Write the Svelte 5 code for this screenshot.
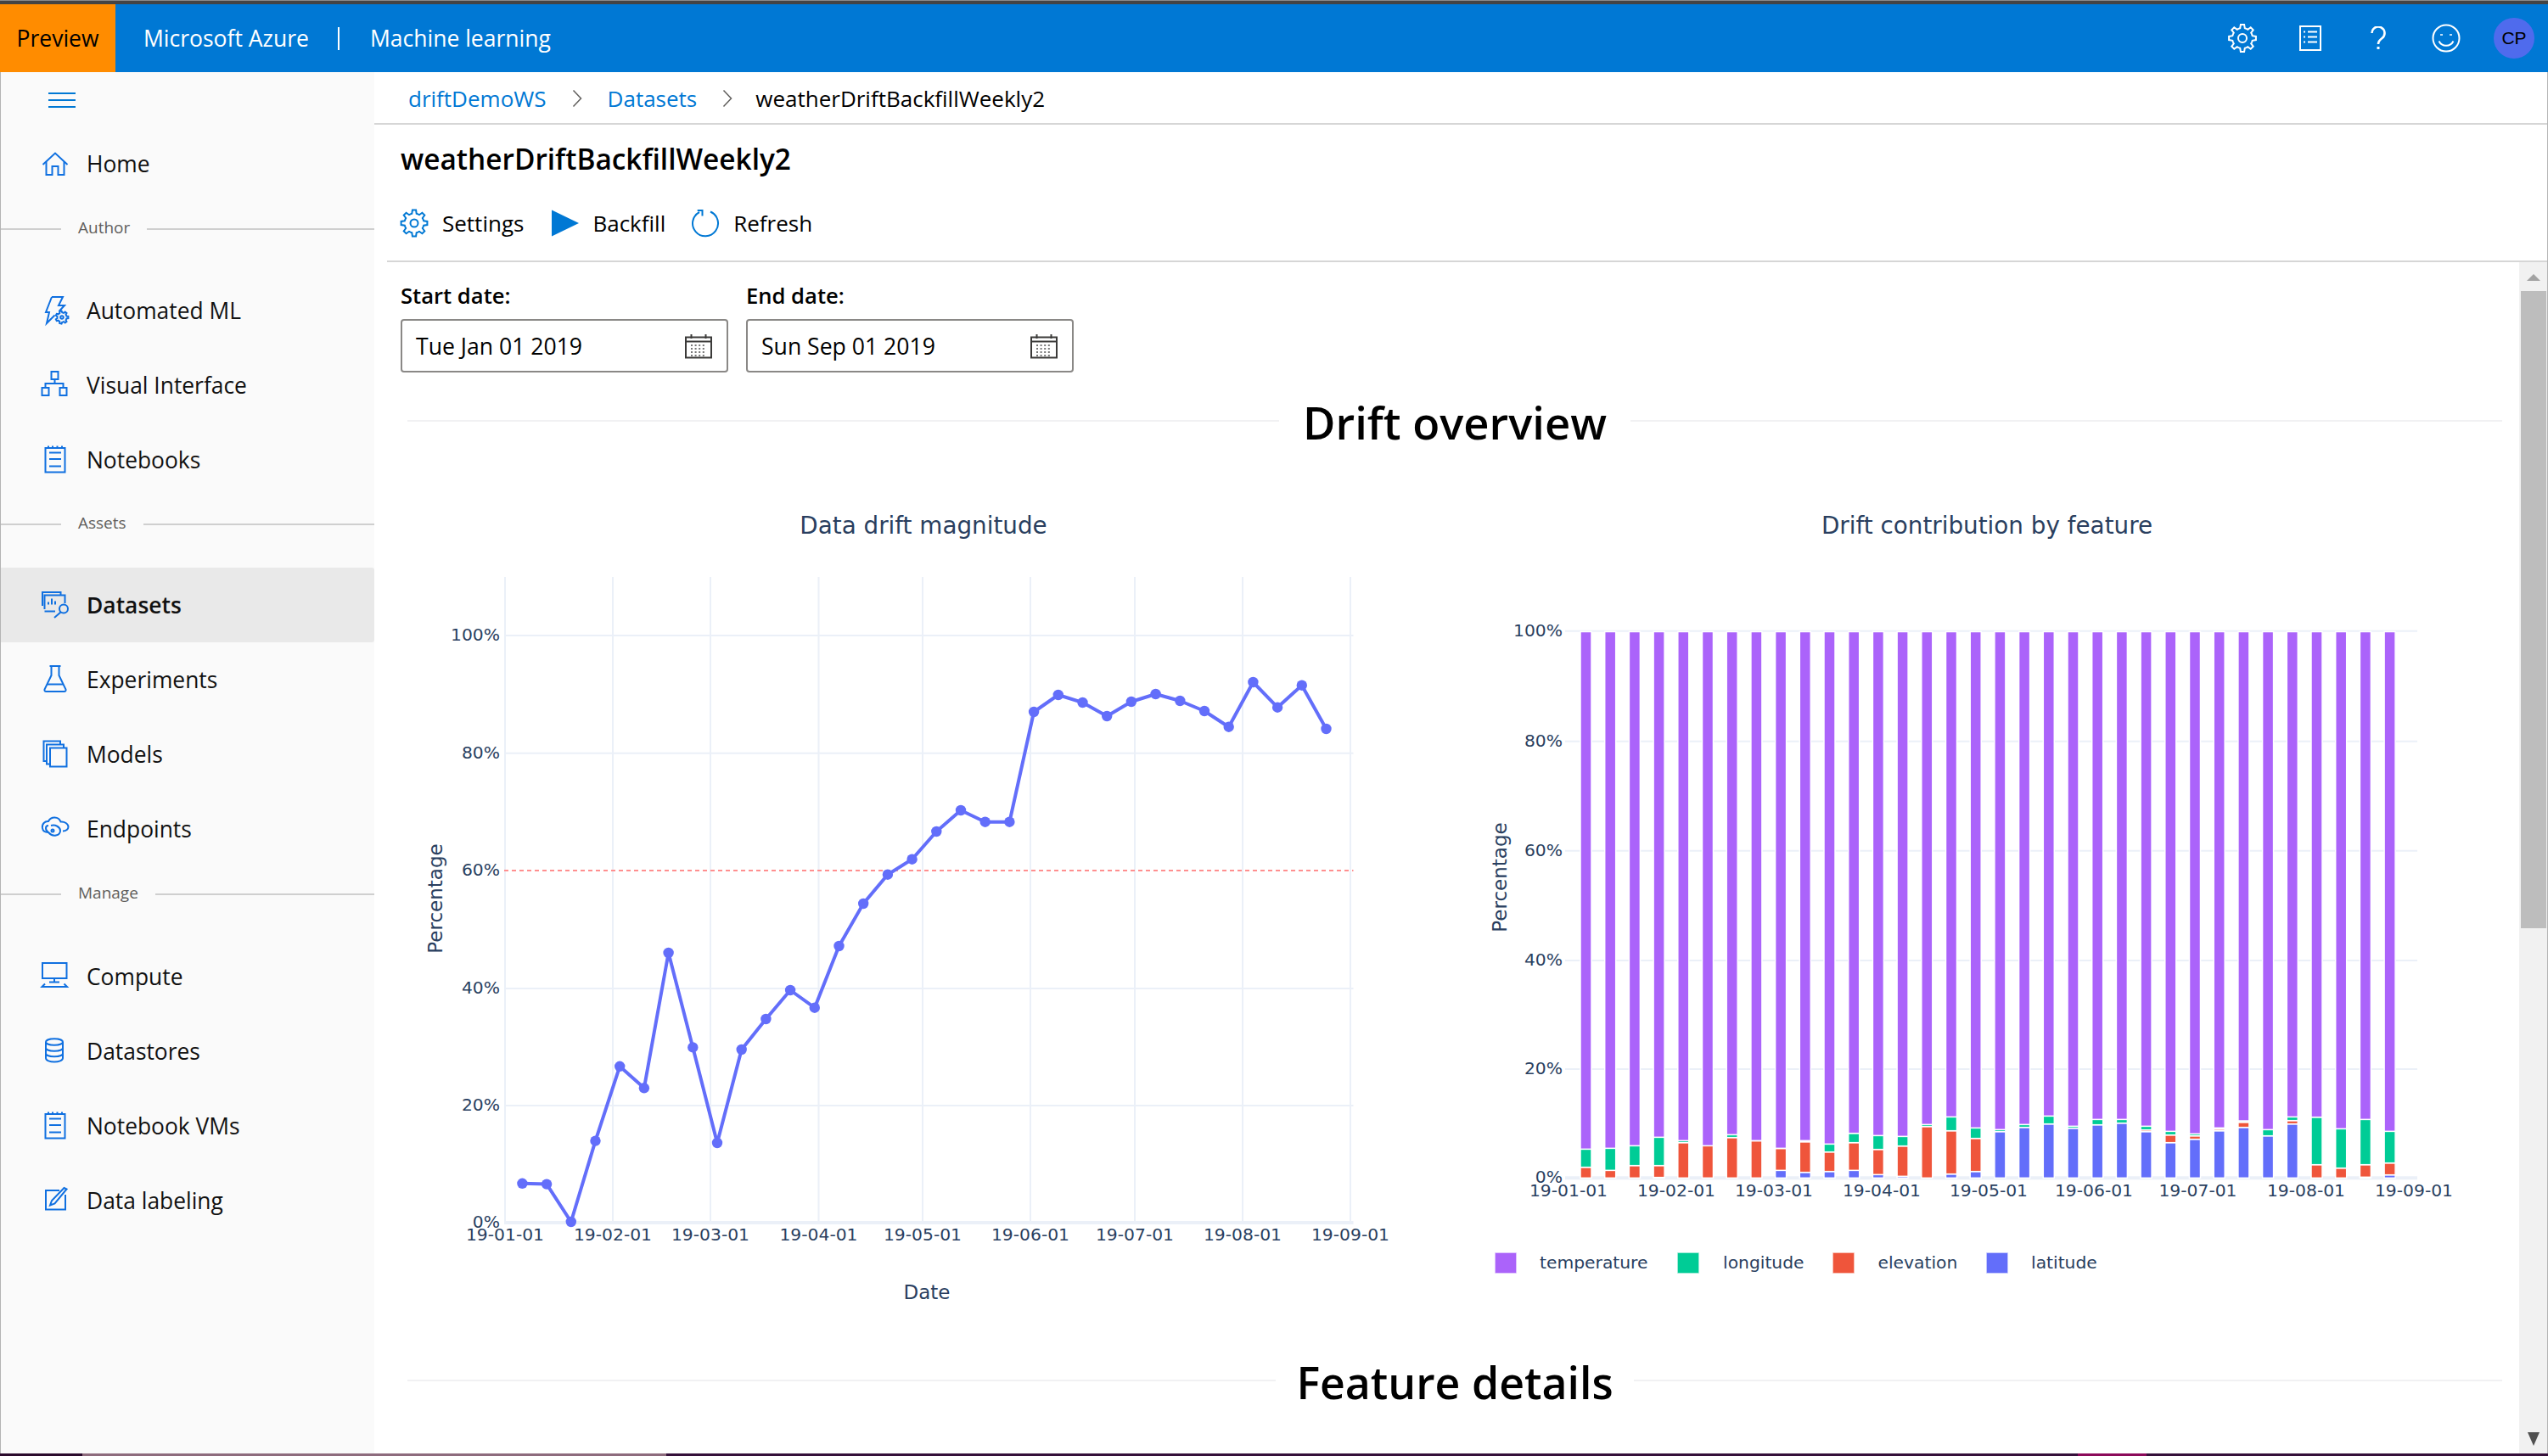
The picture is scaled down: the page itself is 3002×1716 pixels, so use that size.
<script>
  // gear outline used by the settings icons
  function gear(cx, cy, ro, ri, teeth) {
    let d = '';
    const step = (Math.PI * 2) / teeth;
    for (let i = 0; i < teeth; i++) {
      const a = i * step;
      const pts = [
        [ri, a - step * 0.5],
        [ri, a - step * 0.3],
        [ro, a - step * 0.17],
        [ro, a + step * 0.17],
        [ri, a + step * 0.3]
      ];
      for (const [r, t] of pts) {
        const x = (cx + r * Math.cos(t)).toFixed(1);
        const y = (cy + r * Math.sin(t)).toFixed(1);
        d += (d ? 'L' : 'M') + x + ' ' + y;
      }
    }
    return d + 'Z';
  }

  const ring = (cx, cy, r) => `M${cx - r} ${cy}a${r} ${r} 0 1 0 ${r * 2} 0a${r} ${r} 0 1 0 ${-r * 2} 0`;

  const icons = {
    home: ['M7.5 23 22 9.5 36.5 23', 'M11.5 19.5V35H18.5V25H25.5V35H32.5V19.5'],
    automl: ['M18 6H31L26 16H33L26.5 23', 'M21.5 27.5L12 37L15 24H11L18 6', gear(30, 30, 7.5, 5.6, 7), ring(30, 30, 1.8)],
    visual: ['M17.5 6h8v9h-8z', 'M6.5 25h8v9h-8z', 'M27.5 25h8v9h-8z', 'M21.5 15v5', 'M10.5 25v-5h21v5'],
    notebook: ['M10.5 8H33.5V36.5H10.5Z', 'M15 13.5H29', 'M15 21H29', 'M15 29.5H29', 'M14 5.5V8', 'M19 5.5V8', 'M24.5 5.5V8', 'M30 5.5V8'],
    datasets: ['M7 23V7H28.5V10', 'M9.5 27V10.5H33.5V20', 'M9.5 29.5H22', 'M14 21.5v-3', 'M18 21.5v-7', 'M22 21.5v-4', ring(32, 26.5, 5), 'M28.5 30.5L21 37'],
    experiments: ['M15.5 6H28.5', 'M17.5 6V17L9.5 33.5Q9 36 11.5 36H32.5Q35 36 34.5 33.5L26.5 17V6', 'M13 27.5H31'],
    models: ['M12 30H8.5V6.5H28V10', 'M16 33.5H12V10.5H32V14', 'M16 14.5H35.5V36.5H16Z'],
    endpoints: ['M7 21C6 16 10 12.5 14 13C17 7 26 7 28.5 13.5C33 13 37.5 16 37.5 19.5C37.5 22 35 24.5 31 24.5', 'M7 21C7.5 25 11 26 14 26', 'M14 18C10 18 10 23 14 26C19 32 28 30 28 24C28 19.5 22 16.5 17 18', ring(19, 24, 1.5)],
    compute: ['M7 6H35.5V24H7Z', 'M21 24V28', 'M15 28.5H27', 'M10 30.5L6.5 34H36L32.5 30.5'],
    datastores: ['M11 11c0-5 20-5 20 0s-20 5-20 0z', 'M11 11V30c0 6 20 6 20 0V11', 'M11 18c0 5 20 5 20 0', 'M11 24.5c0 5 20 5 20 0'],
    labeling: ['M34 15V32.5H11V10H27', 'M35.5 8.5L32.5 7L18 22L16 27.5L21.5 25.5Z']
  };

  const groups = [
    { title: null, items: [{ name: 'Home', icon: 'home' }] },
    { title: 'Author', items: [
      { name: 'Automated ML', icon: 'automl' },
      { name: 'Visual Interface', icon: 'visual' },
      { name: 'Notebooks', icon: 'notebook' }
    ] },
    { title: 'Assets', tight: true, items: [
      { name: 'Datasets', icon: 'datasets', active: true },
      { name: 'Experiments', icon: 'experiments' },
      { name: 'Models', icon: 'models' },
      { name: 'Endpoints', icon: 'endpoints' }
    ] },
    { title: 'Manage', loose: true, items: [
      { name: 'Compute', icon: 'compute' },
      { name: 'Datastores', icon: 'datastores' },
      { name: 'Notebook VMs', icon: 'notebook' },
      { name: 'Data labeling', icon: 'labeling' }
    ] }
  ];

  // drift magnitude, values are pixel rows of the plot
  const driftY = [1394.8, 1395.6, 1440, 1344.6, 1256.8, 1282.3, 1123, 1234.4, 1347, 1237, 1201, 1167, 1187.7,
    1115, 1065, 1030.7, 1012.7, 980, 955, 968.7, 968.7, 839, 819, 828, 844, 827, 818, 826, 838, 856.7, 804, 833.7, 807.7, 859];
  const driftPts = driftY.map((y, i) => [615.4 + i * 28.7, y]);
  const driftLine = driftPts.map((p) => p.join(',')).join(' ');

  const leftGridX = [595, 722, 837, 964.5, 1087, 1214, 1337, 1464, 1591];
  const leftTicks = ['19-01-01', '19-02-01', '19-03-01', '19-04-01', '19-05-01', '19-06-01', '19-07-01', '19-08-01', '19-09-01'];
  const leftGridY = [[1441, '0%'], [1303, '20%'], [1165, '40%'], [1026, '60%'], [887.7, '80%'], [749, '100%']];

  const rightTickX = [1848, 1975, 2090, 2217, 2343, 2467, 2589.5, 2717, 2844];
  const rightGridY = [[1388.3, '0%'], [1260, '20%'], [1132, '40%'], [1002.7, '60%'], [873.7, '80%'], [743.7, '100%']];

  // [latitude top, elevation top, longitude top] measured in the reference, 3x rows from y=1120
  const stacks = [
    [805, 767, 703], [805, 778, 700], [805, 761, 691], [803, 761, 661], [805, 680, 673], [805, 691, 691],
    [805, 662, 652], [805, 674, 673], [778, 701, 700], [785, 677, 673], [782, 713, 685], [778, 680, 647],
    [793, 704, 655], [799, 692, 658], [805, 623, 616], [791, 638, 589], [782, 665, 628], [641, 641, 634],
    [626, 626, 616], [614, 614, 586], [629, 629, 622], [617, 617, 598], [611, 611, 598], [641, 635, 622],
    [680, 653, 640], [668, 656, 649], [638, 632, 628], [626, 608, 603], [656, 656, 634], [614, 602, 589],
    [805, 758, 590], [805, 770, 631], [802, 758, 598], [794, 752, 640]
  ];
  const row = (z) => 1120 + z / 3;
  const base = row(805);
  const barTop = 744.5;
  const bars = stacks.map(([lat, ele, lon], i) => {
    const x = 1868.5 + i * 28.7 - 6.5;
    const segs = [
      { y: row(lat), h: base - row(lat), c: '#636efa' },
      { y: row(ele), h: row(lat) - row(ele), c: '#ef553b' },
      { y: row(lon), h: row(ele) - row(lon), c: '#00cc96' },
      { y: barTop, h: row(lon) - barTop, c: '#ab63fa' }
    ];
    return { x, segs: segs.filter((s) => s.h > 0.5) };
  });

  const legend = [
    { label: 'temperature', c: '#ab63fa', x: 1762, tx: 1814 },
    { label: 'longitude', c: '#00cc96', x: 1977, tx: 2030 },
    { label: 'elevation', c: '#ef553b', x: 2160, tx: 2212.5 },
    { label: 'latitude', c: '#636efa', x: 2341, tx: 2393 }
  ];
</script>

{#snippet calendar()}
  <svg class="cal" viewBox="0 0 32 30" width="32" height="30" aria-hidden="true">
    <path d="M1 4.5H31V28.5H1Z" fill="none" stroke="#3b3a39" stroke-width="2" />
    <path d="M1 9.5H31" stroke="#3b3a39" stroke-width="2" />
    <path d="M7.5 1V6M24.5 1V6" stroke="#3b3a39" stroke-width="2" />
    <path d="M7 14H25M7 18H25M7 22H25M7 26H25" stroke="#777" stroke-width="2" stroke-dasharray="2 2.6" />
  </svg>
{/snippet}

<div class="app">
  <div class="strip"></div>

  <header class="topbar">
    <div class="preview">Preview</div>
    <span class="brand">Microsoft Azure</span>
    <span class="sep"></span>
    <span class="product">Machine learning</span>
    <div class="actions">
      <button aria-label="Settings">
        <svg viewBox="0 0 36 36" width="36" height="36"><path d={gear(18, 18, 16, 12, 8)} /><circle cx="18" cy="18" r="5" /></svg>
      </button>
      <button aria-label="Directory">
        <svg viewBox="0 0 26 30" width="26" height="30"><path d="M1 1H25V29H1Z" /><path d="M5 7.5H7M10 7.5H21M5 13.5H7M10 13.5H21M5 19.5H7M10 19.5H21" /></svg>
      </button>
      <button aria-label="Help">
        <svg viewBox="0 0 18 28" width="18" height="28"><path d="M1.5 8a7.5 7.5 0 1 1 12 6c-3 2.2-4.5 3.6-4.5 7" stroke-width="2.6" /><path d="M9 24v3" stroke-width="3" /></svg>
      </button>
      <button aria-label="Feedback">
        <svg viewBox="0 0 34 34" width="34" height="34"><circle cx="17" cy="17" r="15.5" /><path d="M8.5 20.5a9.5 9.5 0 0 0 17 0" /><path d="M11.5 12.2v1.6M22.5 12.2v1.6" stroke-width="3" /></svg>
      </button>
      <button aria-label="Account"><span class="avatar">CP</span></button>
    </div>
  </header>

  <div class="body">
    <nav class="sidebar">
      <div class="hamburger"><span></span><span></span><span></span></div>
      {#each groups as group}
        {#if group.title}
          <div class="divider" class:tight={group.tight} class:loose={group.loose}>
            <i class="stub"></i><span>{group.title}</span><i class="rest"></i>
          </div>
        {/if}
        {#each group.items as item}
          <a class="item" class:active={item.active} href="#top">
            <svg viewBox="0 0 44 44" width="44" height="44" aria-hidden="true">
              {#each icons[item.icon] as d}<path {d} />{/each}
            </svg>
            <span>{item.name}</span>
          </a>
        {/each}
      {/each}
    </nav>

    <main class="main">
      <div class="crumbs">
        <a href="#top">driftDemoWS</a>
        <svg class="chev" viewBox="0 0 12 22" width="12" height="22"><path d="M1.5 1.5 10.5 11 1.5 20.5" /></svg>
        <a href="#top">Datasets</a>
        <svg class="chev last" viewBox="0 0 12 22" width="12" height="22"><path d="M1.5 1.5 10.5 11 1.5 20.5" /></svg>
        <span>weatherDriftBackfillWeekly2</span>
      </div>

      <h1>weatherDriftBackfillWeekly2</h1>

      <div class="toolbar">
        <div class="tool">
          <svg class="outline" viewBox="0 0 34 34" width="34" height="34"><path d={gear(17, 17, 15.5, 11.5, 8)} /><circle cx="17" cy="17" r="4.5" /></svg>
          <span>Settings</span>
        </div>
        <div class="tool">
          <svg viewBox="0 0 32 32" width="32" height="32"><path d="M0 0.5 32 16 0 31.5Z" fill="#0078d4" /></svg>
          <span>Backfill</span>
        </div>
        <div class="tool last">
          <svg class="outline" viewBox="0 0 36 36" width="36" height="36"><path d="M24 4.5A15 15 0 1 1 11 5" /><path d="M8.7 3H14.5V9.5" /></svg>
          <span>Refresh</span>
        </div>
      </div>

      <div class="scroller">
        <div class="content">
          <div class="dates">
            <div class="field">
              <label for="start">Start date:</label>
              <div class="input" id="start">Tue Jan 01 2019 {@render calendar()}</div>
            </div>
            <div class="field">
              <label for="end">End date:</label>
              <div class="input" id="end">Sun Sep 01 2019 {@render calendar()}</div>
            </div>
          </div>

          <div class="heading first"><i></i><h2>Drift overview</h2><i></i></div>

          <div class="charts">
            <svg class="chart" viewBox="480 590 1200 970" width="1200" height="970">
              <text class="title" x="1088" y="629">Data drift magnitude</text>
              {#each leftGridX as x}
                <line class="grid" x1={x} x2={x} y1="680" y2="1441" />
              {/each}
              {#each leftGridY as [y, label], i}
                {#if label !== '60%'}
                  <line class="grid" class:zero={i === 0} x1="594" x2="1594.5" y1={y} y2={y} />
                {/if}
                <text class="tick end" x="589" y={y + 6}>{label}</text>
              {/each}
              <line class="limit" x1="594" x2="1594.5" y1="1026" y2="1026" />
              <polyline class="drift" points={driftLine} />
              {#each driftPts as [x, y]}
                <circle class="dot" cx={x} cy={y} r="6.2" />
              {/each}
              {#each leftGridX as x, i}
                <text class="tick mid" {x} y="1462">{leftTicks[i]}</text>
              {/each}
              <text class="axis" x="1092" y="1531">Date</text>
              <text class="axis" transform="translate(521 1059) rotate(-90)">Percentage</text>
            </svg>

            <svg class="chart" viewBox="1700 590 1260 970" width="1260" height="970">
              <text class="title" x="2341" y="629">Drift contribution by feature</text>
              {#each rightGridY as [y, label], i}
                <line class="grid" class:zero={i === 0} x1="1844" x2="2848" y1={y} y2={y} />
                <text class="tick end" x="1841" y={y + 6}>{label}</text>
              {/each}
              {#each bars as bar}
                {#each bar.segs as s}
                  <rect x={bar.x} y={s.y} width="13" height={s.h} fill={s.c} stroke="#fff" stroke-width="1.5" />
                {/each}
              {/each}
              {#each rightTickX as x, i}
                <text class="tick mid" {x} y="1410">{leftTicks[i]}</text>
              {/each}
              <text class="axis" transform="translate(1775 1034) rotate(-90)">Percentage</text>
              {#each legend as l}
                <rect class="swatch" x={l.x} y="1477" width="24" height="23" fill={l.c} stroke={l.c} />
                <text class="tick" x={l.tx} y="1495">{l.label}</text>
              {/each}
            </svg>
          </div>

          <div class="heading second"><i></i><h2>Feature details</h2><i></i></div>
        </div>

        <div class="scrollbar">
          <svg viewBox="0 0 16 8" width="16" height="8"><path d="M0 8 8 0 16 8Z" fill="#a3a3a3" /></svg>
          <div class="thumb"></div>
          <svg class="down" viewBox="0 0 14 16" width="14" height="16"><path d="M0 0H14L7 16Z" fill="#505050" /></svg>
        </div>
      </div>
    </main>
  </div>

  <div class="taskbar">
    <i class="a"></i><i class="b"></i><i class="c"></i><i class="d"></i><i class="e"></i>
  </div>
</div>

<style>
  :global(body) {
    margin: 0;
    background: #fff;
  }

  .app {
    width: 3002px;
    height: 1716px;
    display: flex;
    flex-direction: column;
    overflow: hidden;
    font-family: "Open Sans", "Noto Sans", sans-serif;
    color: #000;
  }

  .strip {
    height: 5px;
    background: #444;
    border-top: 1px solid #8a8a8a;
    box-sizing: border-box;
  }

  .topbar {
    height: 80px;
    flex: none;
    display: flex;
    align-items: center;
    background: #0078d4;
    color: #fff;
    font-size: 26.5px;
  }

  .preview {
    width: 136px;
    height: 100%;
    display: flex;
    align-items: center;
    justify-content: center;
    background: #ff8c00;
    color: #000;
  }

  .brand {
    margin-left: 33px;
  }

  .sep {
    width: 2px;
    height: 27px;
    background: #fff;
    margin: 0 36px 0 34px;
  }

  .actions {
    margin-left: auto;
    display: flex;
  }

  .actions button {
    width: 80px;
    height: 80px;
    padding: 0;
    border: 0;
    background: none;
    display: flex;
    align-items: center;
    justify-content: center;
  }

  .actions svg {
    fill: none;
    stroke: #fff;
    stroke-width: 2;
  }

  .avatar {
    width: 48px;
    height: 48px;
    border-radius: 50%;
    background: #4f6bed;
    color: #000;
    font-family: inherit;
    font-size: 21px;
    display: flex;
    align-items: center;
    justify-content: center;
  }

  .body {
    flex: 1;
    min-height: 0;
    display: flex;
    border-left: 1px solid #b4b4b4;
    border-right: 1px solid #b4b4b4;
  }

  .sidebar {
    width: 440px;
    flex: none;
    background: #fafafa;
    display: flex;
    flex-direction: column;
  }

  .hamburger {
    height: 64px;
    box-sizing: border-box;
    padding: 24px 0 0 56px;
    display: flex;
    flex-direction: column;
    gap: 6px;
  }

  .hamburger span {
    width: 32px;
    height: 2px;
    background: #0078d4;
  }

  .divider {
    height: 66px;
    margin-bottom: 19px;
    display: flex;
    align-items: center;
    color: #605e5c;
    font-size: 19px;
  }

  .divider.tight {
    height: 64px;
  }

  .divider.loose {
    margin-bottom: 20px;
  }

  .divider span {
    padding: 0 20px 4px;
  }

  .divider i {
    height: 2px;
    background: #cfcfcf;
  }

  .divider .stub {
    width: 71px;
  }

  .divider .rest {
    flex: 1;
  }

  .item {
    height: 88px;
    flex: none;
    box-sizing: border-box;
    padding-left: 42px;
    display: flex;
    align-items: center;
    gap: 15px;
    color: #111;
    text-decoration: none;
    font-size: 26.4px;
  }

  .item svg {
    fill: none;
    stroke: #1070e0;
    stroke-width: 2;
  }

  .item.active {
    background: #e9e9e9;
    border-radius: 0 3px 3px 0;
    font-weight: 600;
  }

  .main {
    flex: 1;
    min-width: 0;
    display: flex;
    flex-direction: column;
    background: #fff;
  }

  .crumbs {
    height: 62px;
    flex: none;
    box-sizing: border-box;
    padding: 2px 0 0 40px;
    border-bottom: 2px solid #d6d6d6;
    display: flex;
    align-items: center;
    font-size: 26px;
  }

  .crumbs a {
    color: #0078d4;
    text-decoration: none;
  }

  .chev {
    margin: 0 30px;
    fill: none;
    stroke: #605e5c;
    stroke-width: 1.5;
  }

  .chev.last {
    margin-right: 27px;
  }

  h1 {
    height: 80px;
    flex: none;
    margin: 0;
    padding-left: 31px;
    display: flex;
    align-items: center;
    font-size: 33.4px;
    font-weight: 600;
  }

  .toolbar {
    height: 70px;
    flex: none;
    margin: 0 9px 10px 15px;
    padding: 2px 0 0 15px;
    box-sizing: border-box;
    display: flex;
    align-items: center;
    gap: 33px;
    font-size: 26px;
  }

  .tool {
    display: flex;
    align-items: center;
    gap: 16px;
  }

  .tool.last {
    margin-left: -4px;
    gap: 15px;
  }

  .outline {
    fill: none;
    stroke: #0078d4;
    stroke-width: 2;
  }

  .scroller {
    flex: 1;
    min-height: 0;
    display: flex;
    margin-left: 15px;
    border-top: 2px solid #d6d6d6;
  }

  .content {
    flex: 1;
    min-width: 0;
    overflow: hidden;
    padding-top: 23px;
  }

  .dates {
    display: flex;
    gap: 21px;
    padding-left: 16px;
  }

  .field label {
    display: block;
    height: 34px;
    line-height: 34px;
    margin-bottom: 10px;
    font-size: 25.6px;
    font-weight: 600;
  }

  .input {
    width: 386px;
    height: 63px;
    box-sizing: border-box;
    border: 2px solid #8a8886;
    border-radius: 4px;
    padding: 0 17px 0 16px;
    display: flex;
    align-items: center;
    justify-content: space-between;
    font-size: 26.6px;
  }

  .heading {
    display: flex;
    align-items: center;
    gap: 28px;
    margin: 0 20px 0 24px;
  }

  .heading.first {
    margin-top: 22px;
    height: 70px;
  }

  .heading.second {
    margin-top: 32px;
    height: 70px;
    gap: 24px;
  }

  .heading i {
    flex: 1;
    height: 2px;
    background: #f1f1f3;
  }

  h2 {
    margin: 0;
    padding-top: 3px;
    font-size: 52.5px;
    font-weight: 600;
    white-space: nowrap;
  }

  .heading.second h2 {
    font-size: 51.8px;
  }

  .charts {
    display: flex;
    gap: 20px;
    margin: 59px 0 0 24px;
  }

  .chart {
    flex: none;
    display: block;
  }

  .chart text {
    font-family: "DejaVu Sans", Verdana, sans-serif;
    fill: #2a3f5f;
  }

  .title {
    font-size: 27.8px;
    text-anchor: middle;
  }

  .axis {
    font-size: 23px;
    text-anchor: middle;
  }

  .tick {
    font-size: 20.3px;
  }

  .tick.end {
    text-anchor: end;
  }

  .tick.mid {
    text-anchor: middle;
  }

  .grid {
    stroke: #ebf0f8;
    stroke-width: 2;
  }

  .grid.zero {
    stroke-width: 4;
  }

  .limit {
    stroke: #ff8f8f;
    stroke-width: 2;
    stroke-dasharray: 5 4;
  }

  .drift {
    fill: none;
    stroke: #636efa;
    stroke-width: 4;
    stroke-linejoin: round;
  }

  .dot {
    fill: #636efa;
  }

  .swatch {
    stroke-opacity: 0.5;
    stroke-width: 1.5;
  }

  .scrollbar {
    width: 33px;
    flex: none;
    background: #f1f1f1;
    display: flex;
    flex-direction: column;
    align-items: center;
    padding-top: 14px;
    box-sizing: border-box;
  }

  .thumb {
    width: 30px;
    height: 751px;
    margin-top: 12px;
    background: #bdbdbd;
  }

  .down {
    margin-top: auto;
    margin-bottom: 9px;
  }

  .taskbar {
    height: 3px;
    flex: none;
    display: flex;
  }

  .taskbar .a {
    width: 97px;
    background: #2a0a2c;
  }

  .taskbar .b {
    width: 688px;
    background: #8d6b7d;
  }

  .taskbar .c {
    width: 1663px;
    background: #35103a;
  }

  .taskbar .d {
    width: 81px;
    background: #8b0a5a;
  }

  .taskbar .e {
    flex: 1;
    background: #35103a;
  }
</style>
